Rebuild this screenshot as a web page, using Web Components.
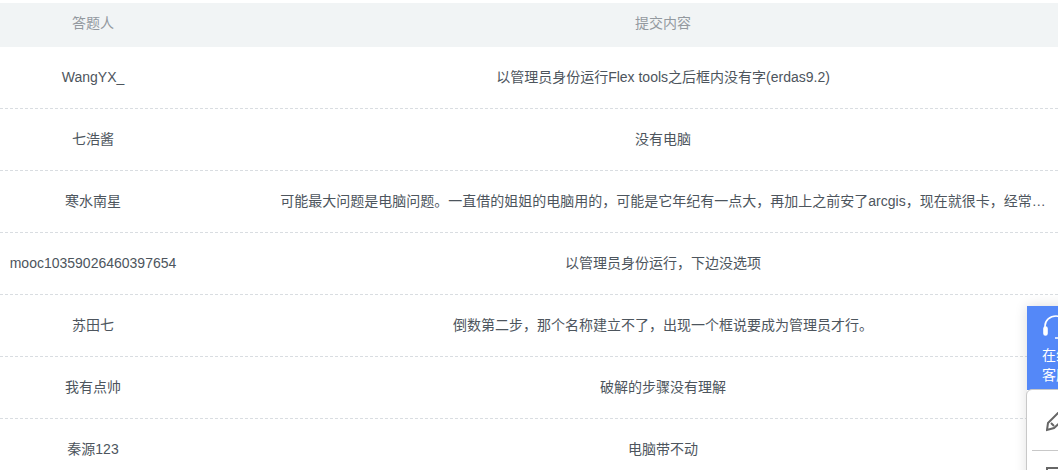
<!DOCTYPE html>
<html lang="zh">
<head>
<meta charset="utf-8">
<title>答题列表</title>
<style>
    html, body { margin: 0; height: 470px; overflow: hidden; background: #fff; }
    body { font-family: "Liberation Sans", "Noto Sans CJK SC", sans-serif; font-size: 14px; color: #4d555d; }
</style>
</head>
<body>
<answer-table>
    <answer-row name="WangYX_" text="以管理员身份运行Flex tools之后框内没有字(erdas9.2)"></answer-row>
    <answer-row name="七浩酱" text="没有电脑"></answer-row>
    <answer-row name="寒水南星" text="可能最大问题是电脑问题。一直借的姐姐的电脑用的，可能是它年纪有一点大，再加上之前安了arcgis，现在就很卡，经常…"></answer-row>
    <answer-row name="mooc10359026460397654" text="以管理员身份运行，下边没选项"></answer-row>
    <answer-row name="苏田七" text="倒数第二步，那个名称建立不了，出现一个框说要成为管理员才行。"></answer-row>
    <answer-row name="我有点帅" text="破解的步骤没有理解"></answer-row>
    <answer-row name="秦源123" text="电脑带不动"></answer-row>
</answer-table>
<side-tools></side-tools>

<script>
class AnswerTable extends HTMLElement {
    connectedCallback() {
        this.attachShadow({ mode: "open" });
        this.shadowRoot.innerHTML = /*HTML*/ `
<style>
    :host { display: block; padding-top: 3px; }
    .head {
        display: grid;
        grid-template-columns: 186px 766px;
        column-gap: 94px;
        height: 44px;
        line-height: 41px;
        background: #f1f4f5;
        color: #93999f;
        text-align: center;
    }
</style>
<div class="head"><div>答题人</div><div>提交内容</div></div>
<slot></slot>`;
    }
}

class AnswerRow extends HTMLElement {
    connectedCallback() {
        this.attachShadow({ mode: "open" });
        this.shadowRoot.innerHTML = /*HTML*/ `
<style>
    :host {
        display: grid;
        grid-template-columns: 186px 766px;
        column-gap: 94px;
        height: 61px;
        line-height: 60px;
        border-bottom: 1px dashed #d9dde1;
        text-align: center;
    }
    div { min-width: 0; white-space: nowrap; }
</style>
<div class="name"></div>
<div class="text"></div>`;
        this.shadowRoot.querySelector(".name").textContent = this.getAttribute("name");
        this.shadowRoot.querySelector(".text").textContent = this.getAttribute("text");
    }
}

class SideTools extends HTMLElement {
    connectedCallback() {
        this.attachShadow({ mode: "open" });
        this.shadowRoot.innerHTML = /*HTML*/ `
<style>
    :host {
        position: absolute;
        left: 1027px;
        top: 306px;
        width: 58px;
        box-shadow: 0 0 12px rgba(0, 0, 0, .14);
    }
    .service {
        height: 84px;
        box-sizing: border-box;
        padding-top: 9px;
        background: #5488f8;
        color: #fff;
        text-align: center;
        font-size: 14px;
        line-height: 20px;
    }
    .service svg { display: block; margin: 0 auto; }
    .tools {
        box-sizing: border-box;
        height: 120px;
        margin: -1px 0 0 -1px;
        padding: 0 5px;
        background: #fff;
        border: 1px solid #c8c8c8;
        border-radius: 6px 0 0 0;
    }
    .pen { display: flex; height: 61px; border-bottom: 1px solid #c8c8c8; padding: 22px 0 0 14px; box-sizing: border-box; }
    .note { padding: 16px 0 0 14px; }
    svg { fill: none; stroke: currentColor; }
    .tools svg { color: #666; }
</style>
<div class="service">
    <svg width="36" height="30" viewBox="0 0 36 30" stroke-width="1.6">
        <path d="M7 13 V11 a11 10 0 0 1 22 0 V13"/>
        <rect x="6" y="12" width="3" height="8" rx="1.5" fill="#fff"/>
        <rect x="27" y="12" width="3" height="8" rx="1.5" fill="#fff"/>
        <path d="M29 20 q0 3 -6 3 H17"/>
    </svg>
    <div>在线<br>客服</div>
</div>
<div class="tools">
    <div class="pen">
        <svg width="24" height="20" viewBox="0 0 24 20" stroke-width="2">
            <path d="M1 18 L2 11 L12 1 L18 7 L8 16 Z M5 11 L8 14"/>
        </svg>
    </div>
    <div class="note">
        <svg width="24" height="24" viewBox="0 0 24 24" stroke-width="2"><rect x="1" y="1" width="20" height="22"/></svg>
    </div>
</div>`;
    }
}

customElements.define("answer-table", AnswerTable);
customElements.define("answer-row", AnswerRow);
customElements.define("side-tools", SideTools);
</script>
</body>
</html>
